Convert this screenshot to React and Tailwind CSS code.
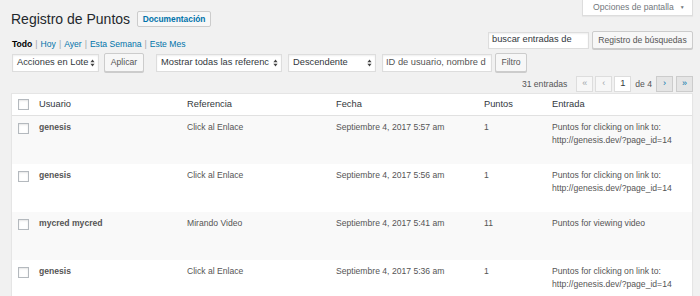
import React from "react";

function Arrows({ className = "" }) {
  return (
    <svg width="5" height="8" viewBox="0 0 5 8" className={className}>
      <path d="M2.5 0.5 L4.6 3.3 L0.4 3.3 Z" fill="#444" />
      <path d="M2.5 7.5 L4.6 4.7 L0.4 4.7 Z" fill="#444" />
    </svg>
  );
}

function Select({ w, ml, children }) {
  return (
    <div
      className={`${w} ${ml} h-[18px] bg-white border border-[#ddd] shadow-[inset_0_1px_2px_rgba(0,0,0,0.07)] flex items-center pl-[4px] pr-[3px] text-[9.3px] text-[#32373c] whitespace-nowrap`}
    >
      <span className="flex-1">{children}</span>
      <Arrows className="shrink-0" />
    </div>
  );
}

function Btn({ w, ml, children, h = "h-[19px]" }) {
  return (
    <div
      className={`${w} ${ml} ${h} bg-[#f7f7f7] border border-[#ccc] rounded-[2px] shadow-[0_1px_0_#ccc] flex items-center justify-center text-[8.6px] text-[#555] whitespace-nowrap`}
    >
      {children}
    </div>
  );
}

function Check() {
  return (
    <div className="w-[11px] h-[11px] bg-white border border-[#b4b9be] shadow-[inset_0_1px_2px_rgba(0,0,0,0.1)]" />
  );
}

const rows = [
  {
    user: "genesis",
    ref: "Click al Enlace",
    date: "Septiembre 4, 2017 5:57 am",
    pts: "1",
    entry: ["Puntos for clicking on link to:", "http://genesis.dev/?page_id=14"],
    stripe: true,
  },
  {
    user: "genesis",
    ref: "Click al Enlace",
    date: "Septiembre 4, 2017 5:56 am",
    pts: "1",
    entry: ["Puntos for clicking on link to:", "http://genesis.dev/?page_id=14"],
    stripe: false,
  },
  {
    user: "mycred mycred",
    ref: "Mirando Video",
    date: "Septiembre 4, 2017 5:41 am",
    pts: "11",
    entry: ["Puntos for viewing video"],
    stripe: true,
  },
  {
    user: "genesis",
    ref: "Click al Enlace",
    date: "Septiembre 4, 2017 5:36 am",
    pts: "1",
    entry: ["Puntos for clicking on link to:", "http://genesis.dev/?page_id=14"],
    stripe: false,
  },
];

const cols = "grid grid-cols-[22px_148px_149px_148px_68px_1fr]";

export default function App() {
  return (
    <div className="w-[700px] h-[296px] overflow-hidden bg-[#f1f1f1] font-['Liberation_Sans',Arial,sans-serif] pl-[11px] pr-[7px]">
      {/* Row A */}
      <div className="h-[31px] flex justify-between items-start">
        <div className="mt-[11px] flex items-start">
          <h1 className="text-[14px] leading-[18px] text-[#23282d] font-normal -mt-[1px]">
            Registro de Puntos
          </h1>
          <div className="ml-[7px] w-[74px] h-[16px] bg-[#f7f7f7] border border-[#ccc] rounded-[2px] flex items-center justify-center text-[8.4px] font-bold text-[#0073aa]">
            Documentación
          </div>
        </div>
        <div className="w-[111px] h-[16px] bg-white border border-t-0 border-[#ddd] shadow-[0_1px_1px_rgba(0,0,0,0.04)] flex items-center pl-[10px] text-[8.6px] text-[#72777c]">
          <span>Opciones de pantalla</span>
          <span className="ml-[6px] text-[5px]">▼</span>
        </div>
      </div>

      {/* Row B */}
      <div className="h-[18px] flex justify-between items-start">
        <div className="pt-[7px] text-[8.6px] leading-[12px] text-[#a0a5aa] whitespace-nowrap ml-[1px]">
          <span className="font-bold text-black">Todo</span>
          <span className="mx-[3px]">|</span>
          <span className="text-[#0073aa]">Hoy</span>
          <span className="mx-[3px]">|</span>
          <span className="text-[#0073aa]">Ayer</span>
          <span className="mx-[3px]">|</span>
          <span className="text-[#0073aa]">Esta Semana</span>
          <span className="mx-[3px]">|</span>
          <span className="text-[#0073aa]">Este Mes</span>
        </div>
        <div className="flex items-center gap-[3px] h-[18px]">
          <div className="w-[101px] h-[17px] bg-white border border-[#ddd] shadow-[inset_0_1px_2px_rgba(0,0,0,0.07)] flex items-center pl-[3px] text-[9.3px] text-[#32373c] whitespace-nowrap">
            buscar entradas de
          </div>
          <Btn w="w-[101px]" ml="" h="h-[18px]">
            Registro de búsquedas
          </Btn>
        </div>
      </div>

      {/* Row C */}
      <div className="mt-[4px] h-[19px] flex items-center">
        <Select w="w-[87px]" ml="ml-[1px]">Acciones en Lote</Select>
        <Btn w="w-[40px]" ml="ml-[5px]">Aplicar</Btn>
        <Select w="w-[126px]" ml="ml-[12px]">Mostrar todas las referenc</Select>
        <Select w="w-[88px]" ml="ml-[6px]">Descendente</Select>
        <div className="ml-[6px] w-[110px] h-[18px] bg-white border border-[#ddd] shadow-[inset_0_1px_2px_rgba(0,0,0,0.07)] flex items-center pl-[3px] text-[9.3px] text-[#555] whitespace-nowrap">
          ID de usuario, nombre d
        </div>
        <Btn w="w-[32px]" ml="ml-[3px]">Filtro</Btn>
      </div>

      {/* Row D: pagination */}
      <div className="mt-[4px] h-[16px] flex items-center justify-end text-[8.6px] text-[#555]">
        <span className="mr-[9px]">31 entradas</span>
        <div className="w-[17px] h-[16px] bg-[#f7f7f7] border border-[#ddd] flex items-center justify-center text-[#a0a5aa] text-[9px]">
          «
        </div>
        <div className="ml-[2px] w-[17px] h-[16px] bg-[#f7f7f7] border border-[#ddd] flex items-center justify-center text-[#a0a5aa] text-[9px]">
          ‹
        </div>
        <div className="ml-[2px] w-[17px] h-[16px] bg-white border border-[#ddd] flex items-center justify-center text-[#32373c] text-[9.3px]">
          1
        </div>
        <span className="mx-[4px]">de 4</span>
        <div className="w-[17px] h-[16px] bg-[#e5e5e5] border border-[#ccc] flex items-center justify-center text-[#0073aa] text-[9px]">
          ›
        </div>
        <div className="ml-[3px] w-[17px] h-[16px] bg-[#e5e5e5] border border-[#ccc] flex items-center justify-center text-[#0073aa] text-[9px]">
          »
        </div>
      </div>

      {/* Table */}
      <div className="mt-[1px] bg-white border border-[#e5e5e5] shadow-[0_1px_1px_rgba(0,0,0,0.04)]">
        <div className={`${cols} h-[22px] border-b border-[#e1e1e1] items-center text-[9.3px] text-[#32373c]`}>
          <div className="pl-[6px] flex items-center">
            <Check />
          </div>
          <div className="px-[5px]">Usuario</div>
          <div className="px-[5px]">Referencia</div>
          <div className="px-[5px]">Fecha</div>
          <div className="px-[5px]">Puntos</div>
          <div className="px-[5px]">Entrada</div>
        </div>
        {rows.map((r, i) => (
          <div
            key={i}
            className={`${cols} h-[48px] text-[8.6px] leading-[13px] text-[#555] ${r.stripe ? "bg-[#f9f9f9]" : "bg-white"}`}
          >
            <div className="pl-[6px] pt-[7px]">
              <Check />
            </div>
            <div className="px-[5px] pt-[5px] font-bold whitespace-nowrap">{r.user}</div>
            <div className="px-[5px] pt-[5px] whitespace-nowrap">{r.ref}</div>
            <div className="px-[5px] pt-[5px] whitespace-nowrap">{r.date}</div>
            <div className="px-[5px] pt-[5px]">{r.pts}</div>
            <div className="px-[5px] pt-[5px] whitespace-nowrap">
              {r.entry.map((l, j) => (
                <div key={j}>{l}</div>
              ))}
            </div>
          </div>
        ))}
      </div>
    </div>
  );
}
